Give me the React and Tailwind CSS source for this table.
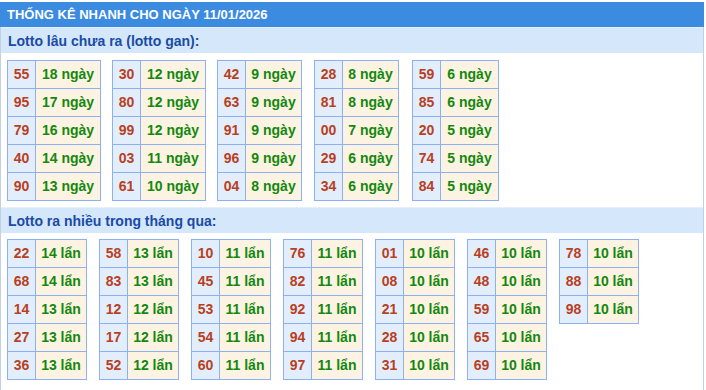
const ganData = [
  { w: "w-[94px]", rows: [["55", "18"], ["95", "17"], ["79", "16"], ["40", "14"], ["90", "13"]] },
  { w: "w-[94px] ml-[11px]", rows: [["30", "12"], ["80", "12"], ["99", "12"], ["03", "11"], ["61", "10"]] },
  { w: "w-[85px] ml-[11px]", rows: [["42", "9"], ["63", "9"], ["91", "9"], ["96", "9"], ["04", "8"]] },
  { w: "w-[85px] ml-[12px]", rows: [["28", "8"], ["81", "8"], ["00", "7"], ["29", "6"], ["34", "6"]] },
  { w: "w-[87px] ml-[13px]", rows: [["59", "6"], ["85", "6"], ["20", "5"], ["74", "5"], ["84", "5"]] },
];

const nhieuData = [
  [["22", "14"], ["68", "14"], ["14", "13"], ["27", "13"], ["36", "13"]],
  [["58", "13"], ["83", "13"], ["12", "12"], ["17", "12"], ["52", "12"]],
  [["10", "11"], ["45", "11"], ["53", "11"], ["54", "11"], ["60", "11"]],
  [["76", "11"], ["82", "11"], ["92", "11"], ["94", "11"], ["97", "11"]],
  [["01", "10"], ["08", "10"], ["21", "10"], ["28", "10"], ["31", "10"]],
  [["46", "10"], ["48", "10"], ["59", "10"], ["65", "10"], ["69", "10"]],
  [["78", "10"], ["88", "10"], ["98", "10"]],
];

const LottoTable = ({ rows, unit, className }) => (
  <table className={`table-fixed border-collapse self-start ${className}`}>
    <tbody>
      {rows.map(([num, count]) => (
        <tr key={num} className="h-[28px]">
          <td className="w-[28px] border border-[#8db0f2] bg-[#e3eefc] text-center text-[#b8401e]">
            {num}
          </td>
          <td className="border border-[#8db0f2] bg-[#fdf3e2] text-center text-[#13880f]">
            {count} {unit}
          </td>
        </tr>
      ))}
    </tbody>
  </table>
);

const SectionBar = ({ title }) => (
  <div className="h-[26px] bg-[#d4e7fb] px-[7px] leading-[26px] text-[#1a4ba6] border-t border-[#e6effa]">
    {title}
  </div>
);

export default function App() {
  return (
    <div
      className="w-[704px] h-[390px] pt-[2px] bg-white text-[14px] font-bold"
      style={{ fontFamily: '"Liberation Sans", Arial, sans-serif' }}
    >
      <div className="h-[25px] bg-[#3b8be0] px-[7px] text-[13px] leading-[25px] text-white">
        THỐNG KÊ NHANH CHO NGÀY 11/01/2026
      </div>
      <div className="w-[704px] border-x border-[#c5cfe2] h-[363px]">
        <SectionBar title="Lotto lâu chưa ra (lotto gan):" />
        <div className="flex px-[6px] pt-[7px] pb-[6px]">
          {ganData.map((t, i) => (
            <LottoTable key={i} rows={t.rows} unit="ngày" className={t.w} />
          ))}
        </div>
        <SectionBar title="Lotto ra nhiều trong tháng qua:" />
        <div className="flex gap-x-[12px] px-[6px] pt-[6px]">
          {nhieuData.map((rows, i) => (
            <LottoTable key={i} rows={rows} unit="lẩn" className="w-[80px]" />
          ))}
        </div>
      </div>
    </div>
  );
}
